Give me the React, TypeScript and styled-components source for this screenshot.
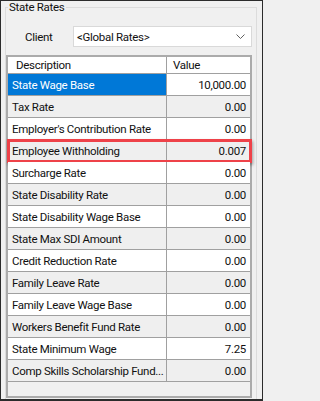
import React from 'react'
import styled, { createGlobalStyle } from 'styled-components'

const Global = createGlobalStyle`
  html, body {
    margin: 0;
    padding: 0;
    background: #f0f0f0;
  }
  * {
    box-sizing: border-box;
  }
`

const Frame = styled.div`
  width: 263px;
  height: 401px;
  border: 1px solid #2b2b2b;
  border-bottom-width: 2px;
  background: #f0f0f0;
  font-family: Roboto, "Liberation Sans", Arial, sans-serif;
  font-size: 11.5px;
  letter-spacing: -0.3px;
  color: #111;
  overflow: hidden;
  padding: 0 5px 0 4px;
`

const Group = styled.fieldset`
  margin: 0;
  padding: 0 4px 0 0;
  border: 1px solid #dcdcdc;
  border-bottom: none;
  height: 420px;
  min-width: 0;
`

const Legend = styled.legend`
  margin-left: 2px;
  padding: 0 2px 0 1px;
  line-height: 12px;
`

const ClientRow = styled.div`
  display: flex;
  align-items: center;
  margin-top: 13px;
  height: 21px;
`

const Label = styled.span`
  width: 67px;
  padding-left: 19px;
`

const Combo = styled.div`
  flex: 1;
  height: 21px;
  background: #fff;
  border: 1px solid #d9d9d9;
  display: flex;
  align-items: center;
  justify-content: space-between;
  padding: 0 6px 0 3px;
`

const Grid = styled.div`
  margin-top: 8px;
  border: 2px solid #ababab;
  height: 343px;
  background: #f0f0f0;
`

const Row = styled.div<{ $alt?: boolean; $header?: boolean }>`
  position: relative;
  display: grid;
  grid-template-columns: 158px 1fr;
  height: ${p => (p.$header ? 17 : 22)}px;
  border-bottom: 1px solid #a0a0a0;
  background: ${p => (p.$alt ? '#efefef' : '#fff')};
`

const Cell = styled.div<{ $right?: boolean; $selected?: boolean; $pad?: number }>`
  display: flex;
  align-items: center;
  justify-content: ${p => (p.$right ? 'flex-end' : 'flex-start')};
  padding: ${p => (p.$right ? '0 4px 0 0' : `0 0 0 ${p.$pad ?? 4}px`)};
  background: ${p => (p.$selected ? '#0078d7' : 'transparent')};
  color: ${p => (p.$selected ? '#fff' : '#111')};
  white-space: nowrap;
  overflow: hidden;
  & + & {
    border-left: 1px solid #a0a0a0;
  }
`

const Highlight = styled.div`
  position: absolute;
  left: -1px;
  top: -1px;
  right: -2px;
  bottom: -2px;
  border: 3px solid #ee4249;
  box-shadow: 1px 2px 3px rgba(0, 0, 0, 0.35);
  pointer-events: none;
`

const Chevron = () => (
  <svg width="9" height="6" viewBox="0 0 9 6">
    <polyline points="0.5,0.5 4.5,4.5 8.5,0.5" fill="none" stroke="#606060" strokeWidth="1" />
  </svg>
)

const rates: [string, string][] = [
  ['State Wage Base', '10,000.00'],
  ['Tax Rate', '0.00'],
  ["Employer's Contribution Rate", '0.00'],
  ['Employee Withholding', '0.007'],
  ['Surcharge Rate', '0.00'],
  ['State Disability Rate', '0.00'],
  ['State Disability Wage Base', '0.00'],
  ['State Max SDI Amount', '0.00'],
  ['Credit Reduction Rate', '0.00'],
  ['Family Leave Rate', '0.00'],
  ['Family Leave Wage Base', '0.00'],
  ['Workers Benefit Fund Rate', '0.00'],
  ['State Minimum Wage', '7.25'],
  ['Comp Skills Scholarship Fund...', '0.00'],
]

export default function App() {
  return (
    <>
      <Global />
      <Frame>
        <Group>
          <Legend>State Rates</Legend>
          <ClientRow>
            <Label>Client</Label>
            <Combo>
              <span>&lt;Global Rates&gt;</span>
              <Chevron />
            </Combo>
          </ClientRow>
          <Grid>
            <Row $header>
              <Cell $pad={8}>Description</Cell>
              <Cell $pad={6}>Value</Cell>
            </Row>
            {rates.map(([name, value], i) => (
              <Row key={name} $alt={i % 2 === 1}>
                <Cell $selected={i === 0}>{name}</Cell>
                <Cell $right>{value}</Cell>
                {name === 'Employee Withholding' && <Highlight />}
              </Row>
            ))}
          </Grid>
        </Group>
      </Frame>
    </>
  )
}
